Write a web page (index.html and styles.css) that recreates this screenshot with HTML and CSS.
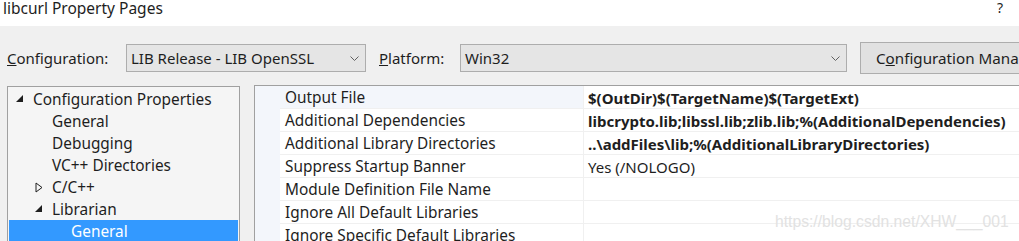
FILE: index.html
```html
<!DOCTYPE html>
<html lang="en">
<head>
    <meta charset="UTF-8">
    <title>libcurl Property Pages</title>
    <link rel="stylesheet" href="styles.css">
</head>
<body>
    <div class="titlebar">
        <span class="title">libcurl Property Pages</span>
        <span class="help">?</span>
    </div>

    <div class="toolbar">
        <label class="label label-config"><u>C</u>onfiguration:</label>
        <div class="combo combo-config">
            <span>LIB Release - LIB OpenSSL</span>
            <svg class="chev" width="9" height="5" viewBox="0 0 9 5"><polyline points="0.5,0.5 4.5,4.5 8.5,0.5" fill="none" stroke="#606060" stroke-width="1"/></svg>
        </div>
        <label class="label label-platform"><u>P</u>latform:</label>
        <div class="combo combo-platform">
            <span>Win32</span>
            <svg class="chev" width="9" height="5" viewBox="0 0 9 5"><polyline points="0.5,0.5 4.5,4.5 8.5,0.5" fill="none" stroke="#606060" stroke-width="1"/></svg>
        </div>
        <button class="config-button">C<u>o</u>nfiguration Manager...</button>
    </div>

    <div class="main">
        <div class="tree">
            <div class="tree-row lvl0">
                <svg class="tri" width="8" height="8" viewBox="0 0 8 8"><polygon points="7,0 7,7 0,7" fill="#1e1e1e"/></svg>
                <span>Configuration Properties</span>
            </div>
            <div class="tree-row lvl1"><span>General</span></div>
            <div class="tree-row lvl1"><span>Debugging</span></div>
            <div class="tree-row lvl1"><span>VC++ Directories</span></div>
            <div class="tree-row lvl1">
                <svg class="tri tri-open" width="8" height="11" viewBox="0 0 8 11"><polygon points="1,1 7,5.5 1,10" fill="none" stroke="#1e1e1e" stroke-width="1"/></svg>
                <span>C/C++</span>
            </div>
            <div class="tree-row lvl1">
                <svg class="tri" width="8" height="8" viewBox="0 0 8 8"><polygon points="7,0 7,7 0,7" fill="#1e1e1e"/></svg>
                <span>Librarian</span>
            </div>
            <div class="tree-row lvl2 selected"><span>General</span></div>
        </div>

        <div class="grid">
            <div class="grid-row current">
                <div class="gutter"></div>
                <div class="name">Output File</div>
                <div class="value bold">$(OutDir)$(TargetName)$(TargetExt)</div>
            </div>
            <div class="grid-row">
                <div class="gutter"></div>
                <div class="name">Additional Dependencies</div>
                <div class="value bold">libcrypto.lib;libssl.lib;zlib.lib;%(AdditionalDependencies)</div>
            </div>
            <div class="grid-row">
                <div class="gutter"></div>
                <div class="name">Additional Library Directories</div>
                <div class="value bold">..\addFiles\lib;%(AdditionalLibraryDirectories)</div>
            </div>
            <div class="grid-row">
                <div class="gutter"></div>
                <div class="name">Suppress Startup Banner</div>
                <div class="value">Yes (/NOLOGO)</div>
            </div>
            <div class="grid-row">
                <div class="gutter"></div>
                <div class="name">Module Definition File Name</div>
                <div class="value"></div>
            </div>
            <div class="grid-row">
                <div class="gutter"></div>
                <div class="name">Ignore All Default Libraries</div>
                <div class="value"></div>
            </div>
            <div class="grid-row">
                <div class="gutter"></div>
                <div class="name">Ignore Specific Default Libraries</div>
                <div class="value"></div>
            </div>
            <div class="watermark">https://blog.csdn.net/XHW___001</div>
        </div>
    </div>
</body>
</html>
```

FILE: styles.css
```css
body {
    margin: 0;
    width: 1019px;
    height: 241px;
    overflow: hidden;
    background: #f0f0f0;
    font-family: 'Noto Sans', sans-serif;
    font-size: 14px;
    color: #1e1e1e;
}

.titlebar {
    height: 26px;
    box-sizing: border-box;
    background: #ffffff;
    display: flex;
    align-items: flex-start;
    justify-content: space-between;
    padding: 0 16px 0 3px;
}

.title {
    font-size: 15.5px;
    line-height: 18px;
    margin-top: -1px;
    color: #1e1e1e;
}

.help {
    font-size: 14px;
    line-height: 16px;
}

.toolbar {
    display: flex;
    align-items: center;
    padding: 16px 0 12px 7px;
    white-space: nowrap;
    overflow: hidden;
}

.toolbar > * {
    flex-shrink: 0;
}

.label {
    font-size: 15px;
}

.label-config {
    width: 119px;
}

.label-platform {
    margin-left: 13px;
    width: 81px;
}

.combo {
    height: 26px;
    border: 1px solid #adadad;
    background: #e5e5e5;
    display: flex;
    align-items: center;
    justify-content: space-between;
    padding: 0 6px 0 4px;
    font-size: 15px;
}

.combo-config {
    width: 228px;
}

.combo-platform {
    width: 375px;
}

.chev {
    display: block;
}

.config-button {
    margin-left: 13px;
    height: 32px;
    width: 220px;
    border: 1px solid #adadad;
    background: #e1e1e1;
    font-family: 'Noto Sans', sans-serif;
    font-size: 15.2px;
    color: #1e1e1e;
    text-align: left;
    padding: 0 0 0 15px;
}

.main {
    display: flex;
    gap: 14px;
    padding-left: 7px;
}

.tree {
    width: 229px;
    height: 200px;
    border: 1px solid #a0a0a0;
    background: #f5f5f5;
    padding: 1px 1px 0 1px;
    flex-shrink: 0;
}

.tree-row {
    height: 22px;
    display: flex;
    align-items: center;
    position: relative;
    font-size: 15.4px;
    white-space: nowrap;
}

.tree-row .tri {
    position: absolute;
    top: 7px;
}

.tree-row .tri-open {
    top: 6px;
}

.lvl0 { padding-left: 24px; }
.lvl0 .tri { left: 7px; }
.lvl1 { padding-left: 43px; }
.lvl1 .tri { left: 26px; }
.lvl2 { padding-left: 62px; }

.tree-row.selected {
    background: #3399ff;
    color: #ffffff;
}

.grid {
    flex: 1;
    border-top: 1px solid #a0a0a0;
    border-left: 1px solid #a0a0a0;
    background: #ffffff;
    position: relative;
    margin-top: -1px;
}

.grid-row {
    display: flex;
    height: 23px;
}

.gutter {
    width: 25px;
    background: #f3f6fb;
    flex-shrink: 0;
}

.name {
    width: 304px;
    flex-shrink: 0;
    padding: 1px 0 0 5px;
    border-right: 1px solid #f0f0f0;
    border-bottom: 1px solid #f0f0f0;
    box-sizing: border-box;
    font-size: 15.4px;
    line-height: 22px;
    white-space: nowrap;
}

.grid-row.current .name {
    background: #f3f6fb;
}

.value {
    flex: 1;
    padding: 1px 0 0 4px;
    border-bottom: 1px solid #f0f0f0;
    box-sizing: border-box;
    font-size: 15px;
    line-height: 22px;
    white-space: nowrap;
}

.bold {
    font-weight: bold;
}

.watermark {
    position: absolute;
    left: 520px;
    top: 127px;
    font-family: 'Liberation Sans', sans-serif;
    font-size: 15.7px;
    color: #e2e2e2;
}
```
